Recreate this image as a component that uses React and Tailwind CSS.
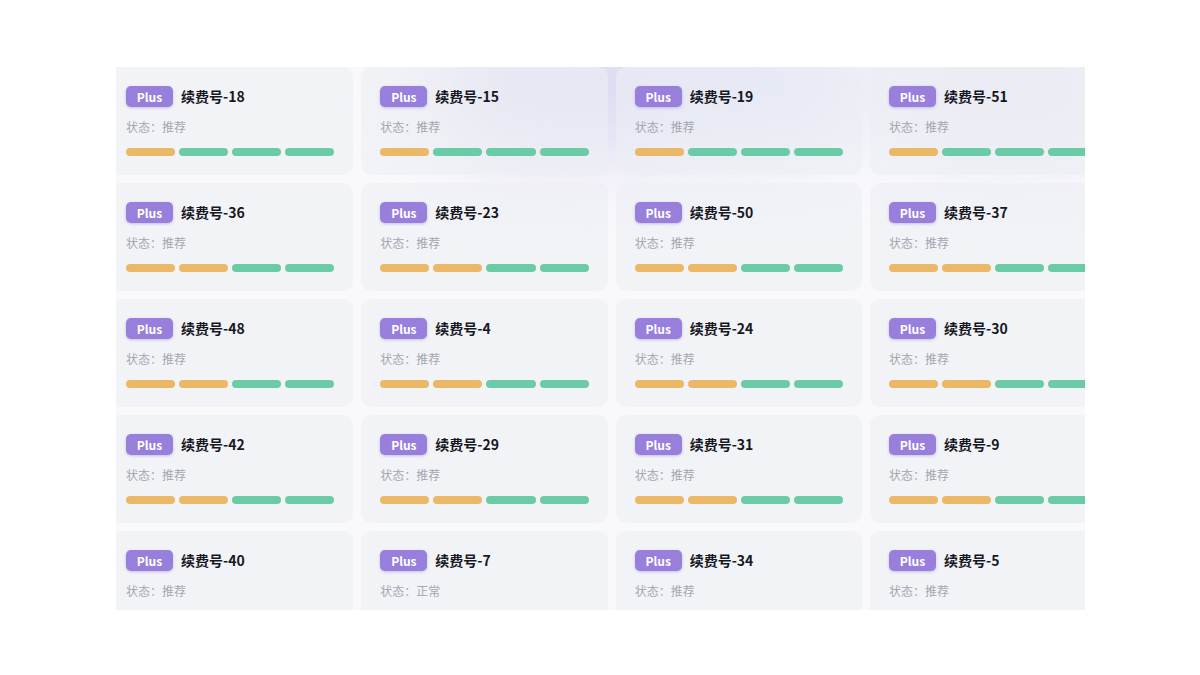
const cards = [
  { n: 18, s: '推荐', o: 1 }, { n: 15, s: '推荐', o: 1 }, { n: 19, s: '推荐', o: 1 }, { n: 51, s: '推荐', o: 1 },
  { n: 36, s: '推荐', o: 2 }, { n: 23, s: '推荐', o: 2 }, { n: 50, s: '推荐', o: 2 }, { n: 37, s: '推荐', o: 2 },
  { n: 48, s: '推荐', o: 2 }, { n: 4, s: '推荐', o: 2 }, { n: 24, s: '推荐', o: 2 }, { n: 30, s: '推荐', o: 2 },
  { n: 42, s: '推荐', o: 2 }, { n: 29, s: '推荐', o: 2 }, { n: 31, s: '推荐', o: 2 }, { n: 9, s: '推荐', o: 2 },
  { n: 40, s: '推荐', o: 2 }, { n: 7, s: '正常', o: 2 }, { n: 34, s: '推荐', o: 2 }, { n: 5, s: '推荐', o: 2 },
];

const Card = ({ card }) => (
  <div className="h-[108px] rounded-[10px] bg-[#eceef3]/60 pt-[19px] px-[19px]">
    <div className="flex h-[21px] items-center">
      <span className="h-[21px] w-[47px] rounded-[5px] bg-[#987fdc] text-center text-[12px] font-bold leading-[21px] text-white shadow-[0_1px_3px_rgba(120,90,200,0.35)]">
        Plus
      </span>
      <span className="ml-2 text-[14px] font-semibold leading-[21px] text-[#17171f]">
        续费号-{card.n}
      </span>
    </div>
    <div className="mt-[11px] h-[18px] text-[12px] leading-[18px] text-[#a3a7b1]">状态：{card.s}</div>
    <div className="mt-[12px] flex gap-1">
      {[0, 1, 2, 3].map((i) => (
        <div
          key={i}
          className={`h-2 flex-1 rounded-full ${i < card.o ? 'bg-[#ebb867]' : 'bg-[#6bcba6]'}`}
        />
      ))}
    </div>
  </div>
);

export default function App() {
  return (
    <div
      className="min-h-screen bg-white pt-[67px] pl-[116px]"
      style={{ fontFamily: '"Noto Sans CJK SC", "Noto Sans", sans-serif' }}
    >
      <div className="relative isolate h-[543px] w-[969px] overflow-hidden bg-[#f9f9fc]">
        {/* soft glow along the top, under the cards */}
        <div className="pointer-events-none absolute left-[320px] top-[-60px] -z-10 h-[150px] w-[260px] rounded-full bg-[#cfc9ee]/60 blur-2xl" />
        <div className="pointer-events-none absolute left-[540px] top-[-50px] -z-10 h-[130px] w-[200px] rounded-full bg-[#c8d2f2]/60 blur-2xl" />
        <div className="pointer-events-none absolute left-[770px] top-[-50px] -z-10 h-[140px] w-[240px] rounded-full bg-[#d3d3f0]/50 blur-2xl" />
        <div className="ml-[-9px] grid grid-cols-[repeat(4,246.33px)] gap-2">
          {cards.map((c, i) => (
            <Card key={i} card={c} />
          ))}
        </div>
      </div>
    </div>
  );
}
